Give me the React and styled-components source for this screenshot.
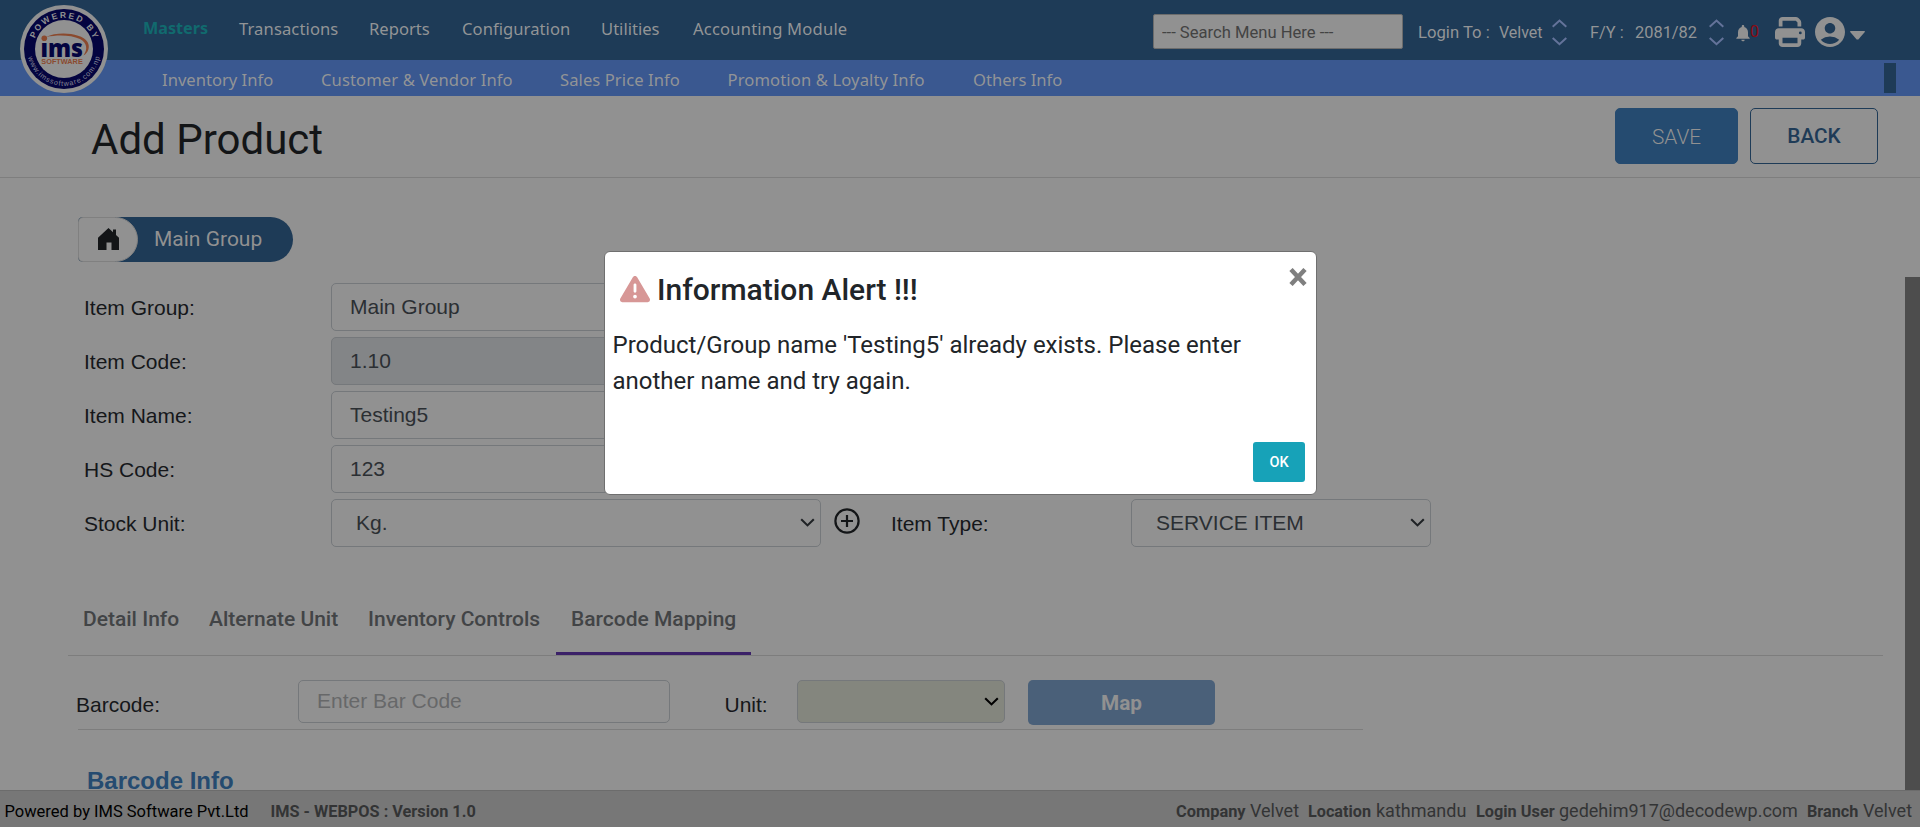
import React from "react";
import styled, { createGlobalStyle } from "styled-components";
import { FaPrint, FaTriangleExclamation } from "react-icons/fa6";
import { MdAccountCircle, MdNotifications } from "react-icons/md";

const roboto = `Roboto, "Liberation Sans", sans-serif`;
const arial = `"Liberation Sans", Arial, sans-serif`;
const humanist = `"Noto Sans", "Open Sans", sans-serif`;

const GlobalStyle = createGlobalStyle`
  *, *::before, *::after { box-sizing: border-box; }
  html, body { margin: 0; padding: 0; overflow: hidden; }
  body { background: #919191; color: #131517; font-family: ${roboto}; }
  button, input { margin: 0; font: inherit; }
`;

const Page = styled.div`
  position: relative;
  display: flex;
  flex-direction: column;
  width: 1920px;
  height: 827px;
  overflow: hidden;
  background: #919191;
`;

const TopBar = styled.header`
  display: flex;
  flex: none;
  height: 60px;
  padding-left: 143px;
  background: #1e3b57;
  color: #919191;
`;

const MenuLink = styled.a`
  flex: none;
  width: ${(p) => p.$w}px;
  margin-right: ${(p) => p.$gap}px;
  color: ${(p) => (p.$active ? "#116a6e" : "#929496")};
  font: ${(p) => (p.$active ? "700 16.2px" : "400 16.6px")}/${(p) => p.$line}px ${humanist};
  letter-spacing: ${(p) => p.$ls || 0}px;
  white-space: nowrap;
`;

const SubBar = styled.nav`
  display: flex;
  flex: none;
  align-items: flex-start;
  height: 36px;
  padding: 3px 0 0 162px;
  background: #3a5890;
`;

const SubMarker = styled.span`
  width: 12px;
  height: 30px;
  margin-left: auto;
  margin-right: 24px;
  background: #1e3b57;
`;

const LogoBadge = styled.svg`
  position: absolute;
  left: 20px;
  top: 5px;
  width: 88px;
  height: 88px;
`;

const Tools = styled.div`
  display: flex;
  flex: none;
  align-items: flex-start;
  width: 767px;
  margin-left: auto;
`;

const SearchBox = styled.input`
  width: 250px;
  height: 35px;
  margin-top: 14px;
  padding: 1px 0 0 8px;
  border: 1px solid #6c6c6c;
  border-radius: 2px;
  background: #919191;
  font: 400 16.6px ${roboto};
  &::placeholder { color: #434343; opacity: 1; }
`;

const ToolText = styled.span`
  flex: none;
  width: ${(p) => p.$w}px;
  margin-left: ${(p) => p.$ml}px;
  margin-top: ${(p) => p.$mt || 23}px;
  color: ${(p) => p.$color || "#929496"};
  font: 400 ${(p) => p.$size || 16}px/20px ${roboto};
  white-space: nowrap;
`;

const ToolIcon = styled.span`
  flex: none;
  display: flex;
  align-items: center;
  justify-content: center;
  width: ${(p) => p.$w}px;
  height: ${(p) => p.$h}px;
  margin-left: ${(p) => p.$ml}px;
  margin-top: ${(p) => p.$mt}px;
  color: #919191;
  svg { flex: none; display: block; }
`;

const TitleBar = styled.section`
  display: flex;
  flex: none;
  height: 82px;
  padding: 12px 42px 0 91px;
  border-bottom: 1px solid #7e7e7e;
`;

const Title = styled.h1`
  flex: 1;
  margin: 0;
  padding-top: 4px;
  color: #131517;
  font: 400 42px/56px ${roboto};
`;

const ActionButton = styled.button`
  width: ${(p) => p.$w}px;
  height: 56px;
  margin-left: 12px;
  padding: ${(p) => (p.$solid ? 1 : 0)}px 0 0;
  border: 1px solid ${(p) => (p.$solid ? "#254b70" : "#1e3b57")};
  border-radius: 5px;
  background: ${(p) => (p.$solid ? "#254b70" : "transparent")};
  color: ${(p) => (p.$solid ? "#919191" : "#1e3b57")};
  font: ${(p) => (p.$solid ? 300 : 500)} 20.8px ${roboto};
`;

const Content = styled.main`
  display: flex;
  flex: 1;
  min-height: 0;
`;

const FormArea = styled.div`
  flex: 1;
  min-width: 0;
  overflow: hidden;
  padding: 39px 0 0 68px;
`;

const ScrollThumb = styled.div`
  flex: none;
  width: 15px;
  margin-top: 99px;
  background: #4d4d4d;
`;

const Crumbs = styled.div`
  display: flex;
  width: 215px;
  height: 45px;
  margin-left: 10px;
  border-radius: 5px 23px 23px 5px;
  background: #1e3b57;
`;

const CrumbHome = styled.div`
  display: flex;
  align-items: center;
  justify-content: center;
  width: 60px;
  padding-bottom: 2px;
  border: 1px solid #808080;
  border-radius: 5px 23px 23px 5px;
  background: #919191;
`;

const CrumbLabel = styled.span`
  padding-left: 16px;
  color: #919191;
  font: 400 21px/44px ${roboto};
`;

const Row = styled.div`
  display: flex;
  align-items: center;
  height: 48px;
  margin-top: ${(p) => p.$mt || 6}px;
  padding-left: 16px;
`;

const Label = styled.label`
  flex: none;
  width: ${(p) => p.$w}px;
  padding-top: 2px;
  color: #15171a;
  font: 400 21px/28px ${arial};
  white-space: nowrap;
`;

const Field = styled.div`
  display: flex;
  flex: none;
  align-items: center;
  justify-content: space-between;
  width: ${(p) => p.$w}px;
  height: ${(p) => p.$h || 48}px;
  padding: 0 ${(p) => p.$pr || 5}px 1px ${(p) => p.$pl || 18}px;
  border: 1px solid #75787b;
  border-radius: 5px;
  background: ${(p) => p.$bg || "transparent"};
  color: ${(p) => p.$color || "#2b2f33"};
  font: 400 21px/28px ${arial};
  white-space: nowrap;
`;

const AddUnit = styled.span`
  display: flex;
  margin: -5px 31px 0 13px;
`;

const Tabs = styled.div`
  display: flex;
  width: 1815px;
  height: 65px;
  margin-top: 44px;
  border-bottom: 1px solid #7d7d7d;
`;

const Tab = styled.div`
  flex: none;
  width: ${(p) => p.$w}px;
  height: 64px;
  padding-left: 15px;
  border-bottom: 3px solid ${(p) => (p.$active ? "#3b2168" : "transparent")};
  color: #424446;
  font: 500 21px/57px ${roboto};
  white-space: nowrap;
`;

const BarcodeRow = styled.div`
  display: flex;
  align-items: flex-start;
  width: 1285px;
  height: 50px;
  margin: 24px 0 0 10px;
  border-bottom: 1px solid #7d7d7d;
`;

const BarcodeLabel = styled(Label)`
  margin-left: ${(p) => p.$ml}px;
  padding-top: 11px;
`;

const MapButton = styled.button`
  width: 187px;
  height: 45px;
  margin-left: 23px;
  padding: 0;
  border: 0;
  border-radius: 5px;
  background: #4a6079;
  color: #919191;
  font: 700 20.8px ${roboto};
`;

const SectionTitle = styled.h2`
  margin: 37px 0 0 19px;
  color: #254b70;
  font: 700 24px/28px ${arial};
`;

const Footer = styled.footer`
  display: flex;
  flex: none;
  align-items: flex-start;
  height: 37px;
  padding: 10px 8px 0 4.500px;
  border-top: 1px solid #6c6c6c;
  background: #777777;
  color: #333435;
`;

const FootText = styled.span`
  flex: none;
  width: ${(p) => p.$w}px;
  margin-right: ${(p) => p.$mr || 0}px;
  color: ${(p) => p.$color || "inherit"};
  font: ${(p) => p.$weight || 400} ${(p) => p.$size || 18}px/${(p) => (p.$size ? 21 : 20)}px ${roboto};
  white-space: nowrap;
`;

const Spacer = styled.span`
  flex: 1;
`;

const Dialog = styled.div`
  position: absolute;
  left: 604px;
  top: 251px;
  display: flex;
  flex-direction: column;
  width: 713px;
  height: 244px;
  padding: 0 11px 12px 8px;
  border: 1px solid #6f6f6f;
  border-radius: 6px;
  background: #ffffff;
  color: #212529;
`;

const DialogHead = styled.div`
  display: flex;
  height: 75px;
  padding: 19px 0 0 7px;
`;

const AlertMark = styled(FaTriangleExclamation)`
  width: 30px;
  height: 30px;
  margin-top: 3px;
  color: #d79796;
`;

const DialogTitle = styled.h3`
  flex: 1;
  margin: 0 0 0 7px;
  font: 500 30px/38px ${roboto};
`;

const CloseMark = styled.svg`
  width: 18px;
  height: 18px;
  margin: -3px -2px 0 0;
`;

const DialogText = styled.p`
  flex: 1;
  margin: 0 0 0 -0.5px;
  font: 400 24px/36px ${roboto};
`;

const OkButton = styled.button`
  align-self: flex-end;
  width: 52px;
  height: 40px;
  padding: 0;
  border: 0;
  border-radius: 3px;
  background: #17a2b8;
  color: #ffffff;
  font: 500 14.5px ${roboto};
`;

function Logo() {
  return (
    <LogoBadge viewBox="0 0 88 88">
      <defs>
        <path id="arcTop" d="M 13 44 A 31 31 0 0 1 75 44" />
        <path id="arcBottom" d="M 7.500 48 A 36.700 36.700 0 0 0 80.500 48" />
      </defs>
      <circle cx="44" cy="44" r="44" fill="#919191" />
      <circle cx="44" cy="44" r="40" fill="#040440" />
      <circle cx="44" cy="44" r="29" fill="#919191" />
      <text fill="#919191" fontFamily="Liberation Sans, sans-serif" fontWeight="700" fontSize="8.5">
        <textPath href="#arcTop" startOffset="50%" textAnchor="middle" textLength="76">POWERED BY</textPath>
      </text>
      <text fill="#858595" fontFamily="Liberation Sans, sans-serif" fontSize="7.2">
        <textPath href="#arcBottom" startOffset="50%" textAnchor="middle" textLength="99">www.imssoftware.com.np</textPath>
      </text>
      <path d="M26 32 C38 26 62 28 67.500 37 C70.500 42 68 48 63.500 50.500 C68 44 67 38 60 34 C51 30 38 29.500 26 32 Z" fill="#8b4a2e" />
      <circle cx="24.300" cy="33.300" r="2.800" fill="#8b4a2e" />
      <text x="20.500" y="52" textLength="42.500" lengthAdjust="spacingAndGlyphs" fill="#040440" fontFamily="Open Sans, sans-serif" fontWeight="800" fontSize="25">ıms</text>
      <text x="21.300" y="58.500" textLength="41.500" lengthAdjust="spacingAndGlyphs" fill="#8b4a2e" fontFamily="Liberation Sans, sans-serif" fontWeight="700" fontSize="6.300">SOFTWARE</text>
    </LogoBadge>
  );
}

const UpDown = () => (
  <svg width="15" height="27" viewBox="0 0 15 27" fill="none" stroke="#64739a" strokeWidth="2">
    <path d="M0.700 7.800 L7.500 1.600 L14.300 7.800" />
    <path d="M0.700 19 L7.500 25.200 L14.300 19" />
  </svg>
);

const SelectArrow = ({ color = "#1f2225" }) => (
  <svg width="15" height="9" viewBox="0 0 15 9" fill="none" stroke={color} strokeWidth="2.100">
    <path d="M1.200 1.200 L7.500 7.400 L13.800 1.200" />
  </svg>
);

const HomeIcon = () => (
  <svg width="21" height="22" viewBox="0 0 21 22" fill="#131517">
    <path d="M10.500 0 L15 4.200 V1.500 H18 V7 L21 9.800 V22 H13.500 V14.500 H8.500 V22 H0 V9.800 Z" />
  </svg>
);

const menu = [
  ["Masters", 64, 0],
  ["Transactions", 98, 0.1],
  ["Reports", 61, 0],
  ["Configuration", 107, 0.05],
  ["Utilities", 60, 0],
  ["Accounting Module", 154, 0.18],
];

const subMenu = [
  ["Inventory Info", 111, 0],
  ["Customer & Vendor Info", 191, 0.1],
  ["Sales Price Info", 119.5, 0.07],
  ["Promotion & Loyalty Info", 197.5, 0.12],
  ["Others Info", 89, 0],
];

const fields = [
  ["Item Group:", "Main Group"],
  ["Item Code:", "1.10"],
  ["Item Name:", "Testing5"],
  ["HS Code:", "123"],
];

const tabs = [
  ["Detail Info", 126],
  ["Alternate Unit", 159],
  ["Inventory Controls", 203],
  ["Barcode Mapping", 195],
];

export default function App() {
  return (
    <Page>
      <GlobalStyle />
      <TopBar>
        {menu.map(([text, w, ls], i) => (
          <MenuLink key={text} $w={w} $gap={32} $line={57} $ls={ls} $active={i === 0}>{text}</MenuLink>
        ))}
        <Tools>
          <SearchBox placeholder="--- Search Menu Here ---" />
          <ToolText $w={71} $ml={15} $size={16.7}>Login To :</ToolText>
          <ToolText $w={45} $ml={10}>Velvet</ToolText>
          <ToolIcon $w={15} $h={27} $ml={8} $mt={19}><UpDown /></ToolIcon>
          <ToolText $w={35} $ml={23} $size={16.4}>F/Y :</ToolText>
          <ToolText $w={63} $ml={10} $size={16.4}>2081/82</ToolText>
          <ToolIcon $w={15} $h={27} $ml={11} $mt={19}><UpDown /></ToolIcon>
          <ToolIcon $w={15} $h={17} $ml={11} $mt={24}><MdNotifications size={20} /></ToolIcon>
          <ToolText $w={9} $ml={0} $mt={22} $color="#8b0a12">0</ToolText>
          <ToolIcon $w={30} $h={30} $ml={16} $mt={17}><FaPrint size={30} /></ToolIcon>
          <ToolIcon $w={30} $h={30} $ml={10} $mt={17}><MdAccountCircle size={36} /></ToolIcon>
          <ToolIcon $w={15} $h={9} $ml={4.5} $mt={31}>
            <svg width="15" height="9" viewBox="0 0 15 9"><path d="M0.500 0 H14.500 L15 0.800 L8.300 8.600 H6.700 L0 0.800 Z" fill="#919191" /></svg>
          </ToolIcon>
        </Tools>
      </TopBar>
      <SubBar>
        {subMenu.map(([text, w, ls]) => (
          <MenuLink key={text} $w={w} $gap={48} $line={33} $ls={ls}>{text}</MenuLink>
        ))}
        <SubMarker />
      </SubBar>
      <Logo />
      <TitleBar>
        <Title>Add Product</Title>
        <ActionButton $w={123} $solid>SAVE</ActionButton>
        <ActionButton $w={128}>BACK</ActionButton>
      </TitleBar>
      <Content>
        <FormArea>
          <Crumbs>
            <CrumbHome><HomeIcon /></CrumbHome>
            <CrumbLabel>Main Group</CrumbLabel>
          </Crumbs>
          {fields.map(([label, value], i) => (
            <Row key={label} $mt={i === 0 ? 21 : 6}>
              <Label $w={247}>{label}</Label>
              <Field $w={490} $bg={i === 1 ? "#838587" : undefined}>{value}</Field>
            </Row>
          ))}
          <Row>
            <Label $w={247}>Stock Unit:</Label>
            <Field $w={490} $pl={24}>Kg.<SelectArrow /></Field>
            <AddUnit>
              <svg width="26" height="26" viewBox="0 0 26 26" fill="none" stroke="#131517" strokeWidth="2.200">
                <circle cx="13" cy="13" r="11.600" />
                <path d="M13 7 V19 M7 13 H19" />
              </svg>
            </AddUnit>
            <Label $w={240}>Item Type:</Label>
            <Field $w={300} $pl={24}>SERVICE ITEM<SelectArrow /></Field>
          </Row>
          <Tabs>
            {tabs.map(([text, w], i) => (
              <Tab key={text} $w={w} $active={i === 3}>{text}</Tab>
            ))}
          </Tabs>
          <BarcodeRow>
            <BarcodeLabel $w={222} $ml={-2}>Barcode:</BarcodeLabel>
            <Field $w={372} $h={43} $color="#676869">Enter Bar Code</Field>
            <BarcodeLabel $w={72.5} $ml={54.5}>Unit:</BarcodeLabel>
            <Field $w={208} $h={43} $bg="#84867e"><span /><SelectArrow color="#000000" /></Field>
            <MapButton>Map</MapButton>
          </BarcodeRow>
          <SectionTitle>Barcode Info</SectionTitle>
        </FormArea>
        <ScrollThumb />
      </Content>
      <Footer>
        <FootText $w={243} $mr={23} $color="#000000" $size={16.5}>Powered by IMS Software Pvt.Ltd</FootText>
        <FootText $w={206} $weight={700} $size={16.3}>IMS - WEBPOS : Version 1.0</FootText>
        <Spacer />
        <FootText $w={70} $mr={4} $weight={700} $size={16.4}>Company</FootText>
        <FootText $w={49} $mr={9}>Velvet</FootText>
        <FootText $w={64} $mr={4} $weight={700} $size={16.2}>Location</FootText>
        <FootText $w={91} $mr={9}>kathmandu</FootText>
        <FootText $w={79} $mr={4} $weight={700} $size={16.3}>Login User</FootText>
        <FootText $w={239} $mr={9}>gedehim917@decodewp.com</FootText>
        <FootText $w={52} $mr={4} $weight={700} $size={16.2}>Branch</FootText>
        <FootText $w={49}>Velvet</FootText>
      </Footer>
      <Dialog>
        <DialogHead>
          <AlertMark />
          <DialogTitle>Information Alert !!!</DialogTitle>
          <CloseMark viewBox="0 0 18 18" stroke="#7f7f7f" strokeWidth="4.500"><path d="M2 1.500 L16 16.500 M16 1.500 L2 16.500" /></CloseMark>
        </DialogHead>
        <DialogText>Product/Group name 'Testing5' already exists. Please enter<br />another name and try again.</DialogText>
        <OkButton>OK</OkButton>
      </Dialog>
    </Page>
  );
}
